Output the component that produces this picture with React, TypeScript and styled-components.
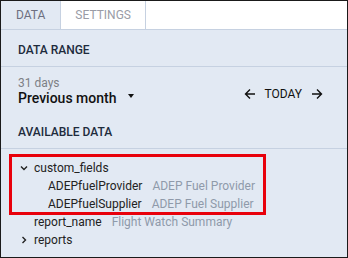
import React, { FC } from "react";
import styled, { createGlobalStyle } from "styled-components";

const GlobalStyle = createGlobalStyle`
  html, body {
    margin: 0;
    padding: 0;
    background: #fff;
  }
  body {
    font-family: Roboto, "Liberation Sans", sans-serif;
  }
`;

const Panel = styled.div`
  width: 348px;
  height: 258px;
  box-sizing: border-box;
  border: 1px solid #1a1a1a;
  background: #e2e9f3;
  display: flex;
  flex-direction: column;
  overflow: hidden;
`;

const TabBar = styled.div`
  display: flex;
  height: 28px;
  flex-shrink: 0;
  background: #fff;
  border-bottom: 1px solid #c6d1e1;
`;

const Tab = styled.div<{ $active?: boolean }>`
  display: flex;
  align-items: center;
  padding: 0 ${(p) => (p.$active ? 15 : 14)}px;
  font-size: 12px;
  color: ${(p) => (p.$active ? "#6d6f80" : "#9a9ca6")};
  background: ${(p) => (p.$active ? "#e2e9f3" : "#fff")};
  border-right: 1px solid #c6d1e1;
`;

const SectionHead = styled.div`
  height: 37px;
  flex-shrink: 0;
  padding: 4px 17px 0;
  box-sizing: border-box;
  display: flex;
  align-items: center;
  font-size: 12px;
  font-weight: 500;
  color: #1d2b3c;
  border-bottom: 1px solid #c6d1e1;
`;

const RangeRow = styled.div`
  display: flex;
  flex-shrink: 0;
  align-items: flex-start;
  justify-content: space-between;
  padding: 9px 24px 0 17px;
  height: 45px;
  box-sizing: border-box;
`;

const RangePicker = styled.div`
  display: flex;
  flex-direction: column;
`;

const RangeHint = styled.span`
  font-size: 12px;
  color: #7d8085;
  line-height: 14px;
`;

const RangeValue = styled.span`
  display: flex;
  align-items: center;
  font-size: 14px;
  font-weight: 500;
  color: #111;
  line-height: 17px;
`;

const Caret = styled.span`
  margin-left: 12px;
  margin-top: -6px;
  width: 0;
  height: 0;
  border-left: 3.5px solid transparent;
  border-right: 3.5px solid transparent;
  border-top: 4px solid #111;
`;

const Stepper = styled.div`
  display: flex;
  align-items: center;
  gap: 9px;
  height: 14px;
  margin-top: 11px;
  font-size: 12px;
  color: #111;
`;

const ArrowIcon: FC<{ dir: "left" | "right" }> = ({ dir }) => (
  <svg width="12" height="12" viewBox="0 0 12 12" fill="none" stroke="#111" strokeWidth="1.4">
    {dir === "left" ? (
      <path d="M11 6H1.5M6 1.5 1.5 6 6 10.5" />
    ) : (
      <path d="M1 6h9.5M6 1.5 10.5 6 6 10.5" />
    )}
  </svg>
);

const Tree = styled.div`
  padding-top: 10px;
`;

const Group = styled.div`
  position: relative;
  &::after {
    content: "";
    position: absolute;
    left: 8px;
    top: -5px;
    width: 257px;
    bottom: -2px;
    box-sizing: border-box;
    border: 3px solid #e8000b;
    pointer-events: none;
  }
`;

const Row = styled.div<{ $depth?: number }>`
  display: flex;
  align-items: center;
  height: 18px;
  padding-left: ${(p) => 33 + (p.$depth ?? 0) * 14}px;
  position: relative;
  font-size: 12px;
  color: #222;
`;

const Toggle = styled.span`
  position: absolute;
  left: 19px;
  top: 4px;
  width: 8px;
  height: 10px;
  display: flex;
  align-items: center;
  justify-content: center;
`;

const Label = styled.span`
  color: #8f9aaa;
  margin-left: 10px;
`;

const Chevron: FC<{ open?: boolean }> = ({ open }) => (
  <svg width="8" height="8" viewBox="0 0 8 8" fill="none" stroke="#222" strokeWidth="1.4">
    {open ? <path d="M1 2.5 4 5.5 7 2.5" /> : <path d="M2.5 1 5.5 4 2.5 7" />}
  </svg>
);

export default function App() {
  return (
    <>
      <GlobalStyle />
      <Panel>
        <TabBar>
          <Tab $active>DATA</Tab>
          <Tab>SETTINGS</Tab>
        </TabBar>
        <SectionHead>DATA RANGE</SectionHead>
        <RangeRow>
          <RangePicker>
            <RangeHint>31 days</RangeHint>
            <RangeValue>
              Previous month
              <Caret />
            </RangeValue>
          </RangePicker>
          <Stepper>
            <ArrowIcon dir="left" />
            <span>TODAY</span>
            <ArrowIcon dir="right" />
          </Stepper>
        </RangeRow>
        <SectionHead>AVAILABLE DATA</SectionHead>
        <Tree>
          <Group>
            <Row>
              <Toggle>
                <Chevron open />
              </Toggle>
              custom_fields
            </Row>
            <Row $depth={1}>
              ADEPfuelProvider<Label>ADEP Fuel Provider</Label>
            </Row>
            <Row $depth={1}>
              ADEPfuelSupplier<Label>ADEP Fuel Supplier</Label>
            </Row>
          </Group>
          <Row>
            report_name<Label>Flight Watch Summary</Label>
          </Row>
          <Row>
            <Toggle>
              <Chevron />
            </Toggle>
            reports
          </Row>
        </Tree>
      </Panel>
    </>
  );
}
